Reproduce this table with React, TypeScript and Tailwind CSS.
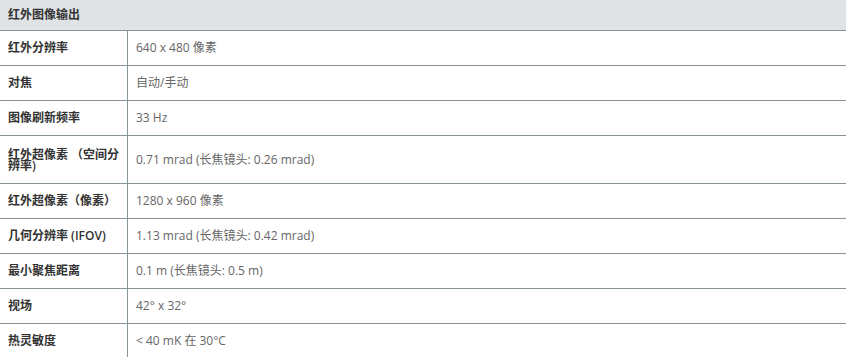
const specs: { label: string; value: string; tall?: boolean }[] = [
  { label: "红外分辨率", value: "640 x 480 像素" },
  { label: "对焦", value: "自动/手动" },
  { label: "图像刷新频率", value: "33 Hz" },
  { label: "红外超像素 （空间分辨率)", value: "0.71 mrad (长焦镜头: 0.26 mrad)", tall: true },
  { label: "红外超像素（像素）", value: "1280 x 960 像素" },
  { label: "几何分辨率 (IFOV)", value: "1.13 mrad (长焦镜头: 0.42 mrad)" },
  { label: "最小聚焦距离", value: "0.1 m (长焦镜头: 0.5 m)" },
  { label: "视场", value: "42° x 32°" },
  { label: "热灵敏度", value: "< 40 mK 在 30°C" },
];

export default function App() {
  return (
    <div
      className="min-h-screen bg-white"
      style={{ fontFamily: '"Open Sans", "Noto Sans CJK SC", sans-serif' }}
    >
      <div className="w-[846px] text-[12px] leading-[12px]">
        {/* Section header */}
        <div className="h-[31px] flex items-center px-2 bg-[#dfe3e6] border-b border-[#87939b] text-[#333] font-semibold">
          红外图像输出
        </div>

        {/* Spec rows */}
        {specs.map((row) => (
          <div
            key={row.label}
            className="grid grid-cols-[128px_1fr] border-b border-[#87939b]"
          >
            <div
              className={
                row.tall
                  ? "flex items-center pl-2 pr-1 py-[12.5px] border-r border-[#87939b] text-[#333] font-semibold leading-[11px]"
                  : "flex items-center pl-2 pr-1 py-[11px] border-r border-[#87939b] text-[#333] font-semibold"
              }
            >
              {row.label}
            </div>
            <div className="flex items-center px-2 py-[11px] text-[#666]">
              {row.value}
            </div>
          </div>
        ))}
      </div>
    </div>
  );
}
